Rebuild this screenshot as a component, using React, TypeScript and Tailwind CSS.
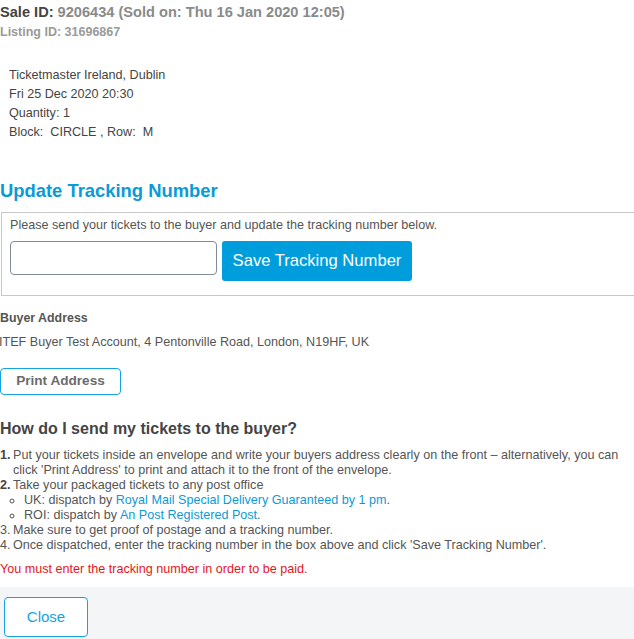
import React from 'react';

const App: React.FC = () => {
  return (
    <div className="w-[634px] h-[639px] overflow-hidden bg-white font-['Liberation_Sans',Arial,sans-serif] text-[#555]">
      <div className="h-[587px]">
        {/* sale header */}
        <div className="pt-[3px] font-bold">
          <div className="text-[14.6px] leading-[18px] text-[#8a8a8a]">
            <span className="text-[#444]">Sale ID:</span> 9206434 (Sold on: Thu 16 Jan 2020 12:05)
          </div>
          <div className="mt-[3px] text-[12.5px] leading-[16px] text-[#9a9a9a]">Listing ID: 31696867</div>
        </div>

        <div className="mt-[26px] pl-[9px] text-[12.6px] leading-[19px] text-[#444]">
          <div>Ticketmaster Ireland, Dublin</div>
          <div>Fri 25 Dec 2020 20:30</div>
          <div>Quantity: 1</div>
          <div>Block:&nbsp; CIRCLE , Row:&nbsp; M</div>
        </div>

        {/* tracking */}
        <h2 className="mt-[38px] text-[18.4px] font-bold leading-[22px] text-[#0a9ad7]">
          Update Tracking Number
        </h2>
        <div className="mt-[10px] ml-px w-[660px] border border-[#c8c8c8] px-[8px] pt-[5px] pb-[14px]">
          <p className="text-[12.6px] leading-[14px] text-[#555]">
            Please send your tickets to the buyer and update the tracking number below.
          </p>
          <div className="mt-[9px] flex items-start gap-[5px]">
            <input
              type="text"
              className="h-[34px] w-[207px] rounded-[4px] border border-[#7f8b95] bg-white px-2 outline-none"
            />
            <button
              type="button"
              className="h-[40px] w-[190px] rounded-[3px] bg-[#009ddc] text-[16.6px] text-white"
            >
              Save Tracking Number
            </button>
          </div>
        </div>

        {/* buyer */}
        <div className="mt-[14px] text-[12.4px] font-bold leading-[16px] text-[#555]">
          Buyer Address
        </div>
        <div className="mt-[8px] -ml-px text-[12.6px] leading-[16px] text-[#555]">
          ITEF Buyer Test Account, 4 Pentonville Road, London, N19HF, UK
        </div>
        <button
          type="button"
          className="mt-[18px] h-[27px] w-[121px] rounded-[4px] border border-[#14a3e0] bg-white text-[13.6px] font-bold text-[#6b6b6b]"
        >
          Print Address
        </button>

        {/* how to */}
        <h3 className="mt-[24px] text-[16px] font-bold leading-[20px] text-[#444]">
          How do I send my tickets to the buyer?
        </h3>
        <ol className="mt-[9px] text-[12.6px] leading-[15px] text-[#555]">
          <li className="flex">
            <span className="w-[13px] shrink-0 font-bold text-[#444]">1.</span>
            <span>
              Put your tickets inside an envelope and write your buyers address clearly on the front – alternatively, you can
              click 'Print Address' to print and attach it to the front of the envelope.
            </span>
          </li>
          <li className="flex">
            <span className="w-[13px] shrink-0 font-bold text-[#444]">2.</span>
            <div>
              Take your packaged tickets to any post office
              <ul className="list-[circle] pl-[24px] -ml-[13px]">
                <li>
                  UK: dispatch by <span className="text-[#0a9ad7]">Royal Mail Special Delivery Guaranteed by 1 pm</span>.
                </li>
                <li>
                  ROI: dispatch by <span className="text-[#0a9ad7]">An Post Registered Post</span>.
                </li>
              </ul>
            </div>
          </li>
          <li className="flex">
            <span className="w-[13px] shrink-0">3.</span>
            <span>Make sure to get proof of postage and a tracking number.</span>
          </li>
          <li className="flex">
            <span className="w-[13px] shrink-0">4.</span>
            <span>Once dispatched, enter the tracking number in the box above and click 'Save Tracking Number'.</span>
          </li>
        </ol>
        <p className="mt-[8px] text-[12.6px] leading-[16px] text-[#e8141b]">
          You must enter the tracking number in order to be paid.
        </p>
      </div>

      {/* footer */}
      <div className="h-[52px] bg-[#f4f5f7] pt-[10px] pl-[4px]">
        <button
          type="button"
          className="h-[40px] w-[84px] rounded-[4px] border border-[#14a3e0] bg-white text-[15px] text-[#14a3e0]"
        >
          Close
        </button>
      </div>
    </div>
  );
};

export default App;
